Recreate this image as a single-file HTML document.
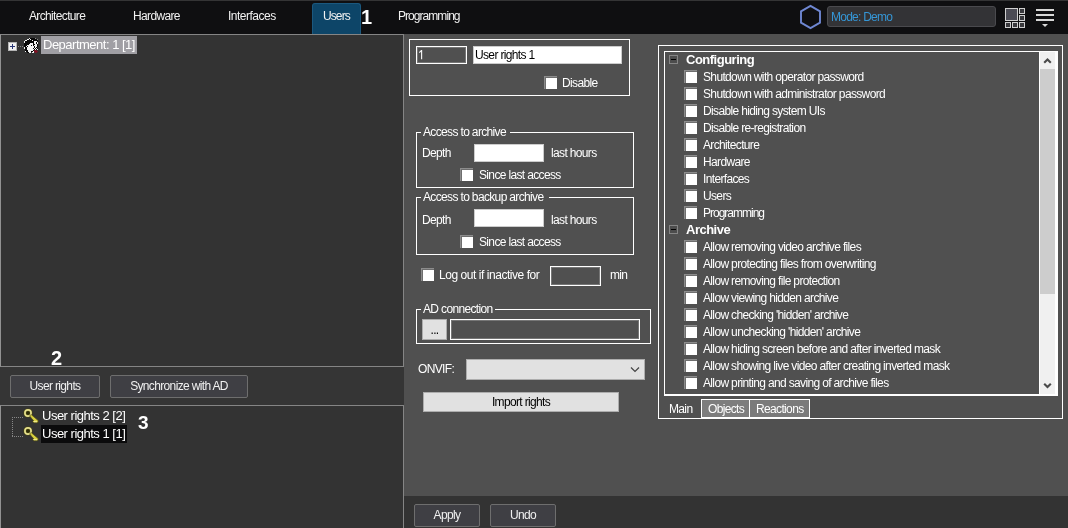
<!DOCTYPE html>
<html><head><meta charset="utf-8">
<style>
*{box-sizing:border-box;margin:0;padding:0}
html,body{width:1068px;height:528px;overflow:hidden;background:#505050;font-family:"Liberation Sans",sans-serif;font-size:12px;color:#fff}
.abs{position:absolute}
.t,.tab,.dbtn,.lbtn,.num{will-change:transform}
#top{left:0;top:0;width:1068px;height:34px;background:#0f0f11;border-top:1px solid #343435}
.tab{position:absolute;top:9px;font-size:12px;color:#f2f2f2;letter-spacing:-0.65px;white-space:nowrap}
#utab{left:312px;top:3px;width:49px;height:31px;background:#0d4568;border:1px solid #1b587e;border-bottom:none;border-radius:3px 3px 0 0}
.num{position:absolute;font-weight:bold;font-size:19px;color:#fff;line-height:19px}
#lp1{left:0;top:34px;width:404px;height:333px;background:#333;border:1px solid #858585;border-left:1px solid #929292}
#lpm{left:0;top:367px;width:404px;height:38px;background:#353535}
#lp2{left:0;top:405px;width:404px;height:123px;background:#333;border:1px solid #858585;border-left:1px solid #929292;border-bottom:none}
.dbtn span,.lbtn span{display:inline-block}
.dbtn{position:absolute;height:23px;background:#3f3f44;border:1px solid #6e6e6e;border-radius:2px;color:#f0f0f0;font-size:12px;letter-spacing:-0.65px;text-align:center;line-height:20px;white-space:nowrap}
.t{position:absolute;white-space:nowrap;font-size:12px;letter-spacing:-0.65px;color:#fff;line-height:14px}
#bot{left:404px;top:496px;width:664px;height:32px;background:#333}
.cb{position:absolute;width:13px;height:13px;background:#fff;box-shadow:inset 1px 1px 0 #8c8c8c, inset 2px 2px 0 #6e6e6e}
.box{position:absolute;border:1px solid #fff}
.di{box-shadow:inset 0 0 0 1px rgba(255,255,255,.22)}
.inp{position:absolute;background:#fff;border:1px solid #ccc}
.lbtn{position:absolute;background:#e1e1e1;border:1px solid #adadad;color:#000;font-size:12px;letter-spacing:-0.65px;text-align:center}
.mn{position:absolute;width:9px;height:9px;border:1px solid #858585;background:#4c4c4c}
.mn:after{content:"";position:absolute;left:1px;top:3px;width:5px;height:1px;background:#000}
</style></head><body>
<div id="top" class="abs"></div>
<div id="utab" class="abs"></div>
<div class="tab" style="left:29px">Architecture</div>
<div class="tab" style="left:133px">Hardware</div>
<div class="tab" style="left:227.5px;letter-spacing:-0.5px">Interfaces</div>
<div class="tab" style="left:323px;letter-spacing:-0.9px">Users</div>
<div class="tab" style="left:398px;letter-spacing:-0.95px">Programming</div>
<div class="num" style="left:361px;top:7px;font-size:20px;line-height:20px">1</div>

<div id="lp1" class="abs"></div>
<div id="lpm" class="abs"></div>
<div id="lp2" class="abs"></div>
<div id="bot" class="abs"></div>

<!-- left panel content -->
<div class="abs" style="left:8px;top:42px;width:9px;height:9px;background:#f2f2f2;border:1px solid #b5b5b5"></div>
<div class="abs" style="left:10px;top:46px;width:5px;height:1px;background:#2a3675"></div>
<div class="abs" style="left:12px;top:44px;width:1px;height:5px;background:#2a3675"></div>
<div class="abs" style="left:18px;top:46px;width:5px;height:1px;border-top:1px dotted #888"></div>
<svg class="abs" style="left:24px;top:38px" width="15" height="15" viewBox="0 0 15 15" shape-rendering="crispEdges"><rect x="5" y="0" width="1" height="1" fill="#f4f4f4"/><rect x="6" y="0" width="5" height="1" fill="#080808"/><rect x="11" y="0" width="1" height="1" fill="#8a8a8a"/><rect x="3" y="1" width="2" height="1" fill="#f4f4f4"/><rect x="5" y="1" width="1" height="1" fill="#080808"/><rect x="6" y="1" width="1" height="1" fill="#f4f4f4"/><rect x="7" y="1" width="6" height="1" fill="#080808"/><rect x="13" y="1" width="1" height="1" fill="#8a8a8a"/><rect x="1" y="2" width="2" height="1" fill="#f4f4f4"/><rect x="3" y="2" width="5" height="1" fill="#080808"/><rect x="8" y="2" width="1" height="1" fill="#f4f4f4"/><rect x="9" y="2" width="5" height="1" fill="#080808"/><rect x="0" y="3" width="1" height="1" fill="#f4f4f4"/><rect x="1" y="3" width="9" height="1" fill="#080808"/><rect x="10" y="3" width="3" height="1" fill="#f4f4f4"/><rect x="13" y="3" width="1" height="1" fill="#080808"/><rect x="0" y="4" width="1" height="1" fill="#f4f4f4"/><rect x="1" y="4" width="9" height="1" fill="#080808"/><rect x="10" y="4" width="2" height="1" fill="#f4f4f4"/><rect x="12" y="4" width="1" height="1" fill="#080808"/><rect x="13" y="4" width="1" height="1" fill="#f4f4f4"/><rect x="0" y="5" width="6" height="1" fill="#080808"/><rect x="6" y="5" width="3" height="1" fill="#f4f4f4"/><rect x="9" y="5" width="1" height="1" fill="#080808"/><rect x="10" y="5" width="2" height="1" fill="#f4f4f4"/><rect x="12" y="5" width="1" height="1" fill="#080808"/><rect x="13" y="5" width="1" height="1" fill="#f4f4f4"/><rect x="0" y="6" width="5" height="1" fill="#080808"/><rect x="5" y="6" width="4" height="1" fill="#f4f4f4"/><rect x="9" y="6" width="2" height="1" fill="#080808"/><rect x="11" y="6" width="2" height="1" fill="#f4f4f4"/><rect x="13" y="6" width="1" height="1" fill="#080808"/><rect x="0" y="7" width="3" height="1" fill="#080808"/><rect x="3" y="7" width="4" height="1" fill="#f4f4f4"/><rect x="7" y="7" width="1" height="1" fill="#080808"/><rect x="8" y="7" width="1" height="1" fill="#f4f4f4"/><rect x="9" y="7" width="1" height="1" fill="#080808"/><rect x="10" y="7" width="3" height="1" fill="#f4f4f4"/><rect x="13" y="7" width="1" height="1" fill="#080808"/><rect x="0" y="8" width="2" height="1" fill="#080808"/><rect x="2" y="8" width="1" height="1" fill="#f4f4f4"/><rect x="3" y="8" width="1" height="1" fill="#080808"/><rect x="4" y="8" width="6" height="1" fill="#f4f4f4"/><rect x="10" y="8" width="1" height="1" fill="#080808"/><rect x="11" y="8" width="2" height="1" fill="#f4f4f4"/><rect x="13" y="8" width="1" height="1" fill="#080808"/><rect x="0" y="9" width="1" height="1" fill="#f4f4f4"/><rect x="1" y="9" width="2" height="1" fill="#080808"/><rect x="3" y="9" width="7" height="1" fill="#f4f4f4"/><rect x="10" y="9" width="1" height="1" fill="#080808"/><rect x="11" y="9" width="1" height="1" fill="#f4f4f4"/><rect x="12" y="9" width="1" height="1" fill="#080808"/><rect x="0" y="10" width="1" height="1" fill="#f4f4f4"/><rect x="1" y="10" width="2" height="1" fill="#080808"/><rect x="3" y="10" width="6" height="1" fill="#f4f4f4"/><rect x="9" y="10" width="1" height="1" fill="#080808"/><rect x="10" y="10" width="1" height="1" fill="#f4f4f4"/><rect x="11" y="10" width="1" height="1" fill="#080808"/><rect x="12" y="10" width="1" height="1" fill="#f4f4f4"/><rect x="13" y="10" width="1" height="1" fill="#080808"/><rect x="1" y="11" width="2" height="1" fill="#080808"/><rect x="3" y="11" width="7" height="1" fill="#f4f4f4"/><rect x="10" y="11" width="1" height="1" fill="#080808"/><rect x="11" y="11" width="1" height="1" fill="#f4f4f4"/><rect x="12" y="11" width="1" height="1" fill="#080808"/><rect x="13" y="11" width="1" height="1" fill="#f4f4f4"/><rect x="1" y="12" width="3" height="1" fill="#080808"/><rect x="4" y="12" width="5" height="1" fill="#f4f4f4"/><rect x="9" y="12" width="1" height="1" fill="#080808"/><rect x="10" y="12" width="3" height="1" fill="#7a1424"/><rect x="1" y="13" width="1" height="1" fill="#f4f4f4"/><rect x="2" y="13" width="2" height="1" fill="#080808"/><rect x="4" y="13" width="3" height="1" fill="#f4f4f4"/><rect x="7" y="13" width="2" height="1" fill="#080808"/><rect x="9" y="13" width="1" height="1" fill="#f4f4f4"/><rect x="10" y="13" width="4" height="1" fill="#7a1424"/><rect x="3" y="14" width="2" height="1" fill="#080808"/><rect x="5" y="14" width="2" height="1" fill="#f4f4f4"/><rect x="8" y="14" width="2" height="1" fill="#f4f4f4"/><rect x="11" y="14" width="2" height="1" fill="#7a1424"/></svg>
<div class="abs" style="left:41px;top:36px;width:96px;height:18px;background:#a09fa4"></div>
<div class="t" style="left:43px;top:37px;font-size:13px;letter-spacing:-0.5px;line-height:15px;transform:none">Department: 1 [1]</div>
<div class="num" style="left:50.5px;top:349px;font-size:20px">2</div>
<div class="dbtn" style="left:10px;top:375px;width:90px"><span>User rights</span></div>
<div class="dbtn" style="left:110px;top:375px;width:138px"><span>Synchronize with AD</span></div>
<div class="abs" style="left:12px;top:417px;width:1px;height:19px;border-left:1px dotted #888"></div>
<div class="abs" style="left:12px;top:417px;width:11px;height:1px;border-top:1px dotted #888"></div>
<div class="abs" style="left:12px;top:436px;width:11px;height:1px;border-top:1px dotted #888"></div>
<svg class="abs key" style="left:23px;top:408px" width="17" height="17" viewBox="0 0 17 17"><g><circle cx="5" cy="5" r="3.1" fill="#2b2b0a" stroke="#4a4612" stroke-width="3"/><circle cx="5" cy="5" r="3.1" fill="none" stroke="#e6e08c" stroke-width="1.7"/><path d="M6.600 7.800 L8.200 6.600 L15.200 12.600 L15 14.600 L11.200 14.800 L9.600 13.600 L10.600 12.400 L9 11 Z" fill="#d8d040" stroke="#4a4612" stroke-width=".7"/><path d="M10.500 13.600 L14 13.800" stroke="#f2eea0" stroke-width="1"/></g></svg>
<svg class="abs key" style="left:23px;top:426px" width="17" height="17" viewBox="0 0 17 17"><g><circle cx="5" cy="5" r="3.1" fill="#2b2b0a" stroke="#4a4612" stroke-width="3"/><circle cx="5" cy="5" r="3.1" fill="none" stroke="#e6e08c" stroke-width="1.7"/><path d="M6.600 7.800 L8.200 6.600 L15.200 12.600 L15 14.600 L11.200 14.800 L9.600 13.600 L10.600 12.400 L9 11 Z" fill="#d8d040" stroke="#4a4612" stroke-width=".7"/><path d="M10.500 13.600 L14 13.800" stroke="#f2eea0" stroke-width="1"/></g></svg>
<div class="t" style="left:42px;top:408px;font-size:13px;letter-spacing:-0.5px;line-height:15px;transform:none">User rights 2 [2]</div>
<div class="abs" style="left:41px;top:425px;width:86px;height:18px;background:#0b0b0c"></div>
<div class="t" style="left:42px;top:426px;font-size:13px;letter-spacing:-0.5px;line-height:15px;transform:none">User rights 1 [1]</div>
<div class="num" style="left:138px;top:413px">3</div>

<!-- mode area -->
<svg class="abs" style="left:798px;top:3px" width="26" height="30" viewBox="0 0 26 30"><path d="M12.500 2.900 L22 8.400 L22 19.600 L12.500 25.100 L3 19.600 L3 8.400 Z" fill="none" stroke="#6f87d2" stroke-width="1.9"/></svg>
<div class="abs" style="left:827px;top:6px;width:169px;height:21px;background:#333336;border:1px solid #4a4a4e;border-radius:3px"></div>
<div class="t" style="left:831px;top:10px;color:#3596d6;font-size:12px;letter-spacing:-0.75px">Mode: Demo</div>
<svg class="abs" style="left:1004px;top:7px" width="22" height="22" viewBox="0 0 22 22"><g fill="#39393d" stroke="#cfcfcf" stroke-width="1"><rect x="1.5" y="1.5" width="12" height="12" fill="#4b4b54"/><rect x="15.500" y="1.500" width="5" height="5"/><rect x="15.500" y="8.500" width="5" height="5"/><rect x="1.500" y="15.500" width="5" height="5"/><rect x="8.500" y="15.500" width="5" height="5"/><rect x="15.500" y="15.500" width="5" height="5"/></g></svg>
<svg class="abs" style="left:1034px;top:7px" width="22" height="22" viewBox="0 0 22 22"><g fill="#d8d8d8"><rect x="2" y="2" width="18" height="2"/><rect x="2" y="7" width="18" height="2"/><rect x="2" y="12" width="18" height="2"/><path d="M8 17 L14 17 L11 20 Z"/></g></svg>

<!-- middle form -->
<div class="box" style="left:409px;top:39px;width:221px;height:57px"></div>
<div class="box di" style="left:416px;top:46px;width:51px;height:18px"></div>
<svg class="abs" style="left:418px;top:50px" width="6" height="10" viewBox="0 0 6 10"><path d="M3.600 0 V9.200 M3.600 0.300 L1.300 2.700" fill="none" stroke="#f4f4f4" stroke-width="1.15"/></svg>
<div class="inp" style="left:473px;top:46px;width:149px;height:18px"></div>
<div class="t" style="left:475px;top:48px;color:#000">User rights 1</div>
<div class="cb" style="left:544px;top:76px"></div>
<div class="t" style="left:562px;top:76px;">Disable</div>

<div class="box" style="left:416px;top:132px;width:218px;height:56px"></div>
<div class="abs" style="left:421px;top:129px;width:89px;height:6px;background:#505050"></div>
<div class="t" style="left:423px;top:125px;">Access to archive</div>
<div class="t" style="left:422px;top:146px;">Depth</div>
<div class="inp" style="left:474px;top:144px;width:70px;height:18px"></div>
<div class="t" style="left:551px;top:146px;">last hours</div>
<div class="cb" style="left:460px;top:168px"></div>
<div class="t" style="left:479px;top:168px;">Since last access</div>

<div class="box" style="left:416px;top:197px;width:218px;height:58px"></div>
<div class="abs" style="left:421px;top:194px;width:128px;height:6px;background:#505050"></div>
<div class="t" style="left:423px;top:190px;">Access to backup archive</div>
<div class="t" style="left:422px;top:213px;">Depth</div>
<div class="inp" style="left:474px;top:209px;width:70px;height:18px"></div>
<div class="t" style="left:551px;top:213px;">last hours</div>
<div class="cb" style="left:460px;top:235px"></div>
<div class="t" style="left:479px;top:235px;">Since last access</div>

<div class="cb" style="left:421px;top:268px"></div>
<div class="t" style="left:439px;top:268px;letter-spacing:-0.45px">Log out if inactive for</div>
<div class="box di" style="left:550px;top:266px;width:51px;height:20px"></div>
<div class="t" style="left:610px;top:268px;">min</div>

<div class="box" style="left:416px;top:309px;width:235px;height:35px"></div>
<div class="abs" style="left:421px;top:306px;width:74px;height:6px;background:#505050"></div>
<div class="t" style="left:423px;top:302px;">AD connection</div>
<div class="lbtn" style="left:422px;top:319px;width:25px;height:21px;line-height:20px"><span>...</span></div>
<div class="box di" style="left:450px;top:319px;width:190px;height:21px"></div>

<div class="t" style="left:418px;top:362px;">ONVIF:</div>
<div class="lbtn" style="left:466px;top:359px;width:179px;height:21px"></div>
<svg class="abs" style="left:630px;top:366px" width="10" height="8" viewBox="0 0 10 8"><path d="M1 1.500 L5 5.500 L9 1.500" fill="none" stroke="#444" stroke-width="1.2"/></svg>
<div class="lbtn" style="left:423px;top:392px;width:196px;height:20px;line-height:18px"><span>Import rights</span></div>

<div class="dbtn" style="left:414px;top:504px;width:66px"><span>Apply</span></div>
<div class="dbtn" style="left:490px;top:504px;width:66px"><span>Undo</span></div>

<!-- right panel -->
<div class="box" style="left:658px;top:45px;width:405px;height:374px"></div>
<div class="box" style="left:664px;top:51px;width:394px;height:345px;border-bottom-width:2px"></div>
<div class="abs" style="left:1039px;top:52px;width:18px;height:342px;background:#f0f0f0;border-left:1px solid #fff;border-right:2px solid #fff"></div>
<div class="abs" style="left:1040px;top:69px;width:15px;height:225px;background:#cdcdcd"></div>
<svg class="abs" style="left:1043px;top:57px" width="9" height="8" viewBox="0 0 9 8"><path d="M1.200 5.800 L4.500 2.500 L7.800 5.800" fill="none" stroke="#4a4a4a" stroke-width="2.1"/></svg>
<svg class="abs" style="left:1043px;top:382px" width="9" height="8" viewBox="0 0 9 8"><path d="M1.200 1.800 L4.500 5.100 L7.800 1.800" fill="none" stroke="#4a4a4a" stroke-width="2.1"/></svg>
<div class="mn" style="left:669px;top:55px"></div>
<div class="t" style="left:686px;top:53px;font-weight:bold;font-size:13px;letter-spacing:-0.5px">Configuring</div>
<div class="cb" style="left:684px;top:70px"></div>
<div class="t" style="left:703px;top:70px;">Shutdown with operator password</div>
<div class="cb" style="left:684px;top:87px"></div>
<div class="t" style="left:703px;top:87px;">Shutdown with administrator password</div>
<div class="cb" style="left:684px;top:104px"></div>
<div class="t" style="left:703px;top:104px;">Disable hiding system UIs</div>
<div class="cb" style="left:684px;top:121px"></div>
<div class="t" style="left:703px;top:121px;">Disable re-registration</div>
<div class="cb" style="left:684px;top:138px"></div>
<div class="t" style="left:703px;top:138px;">Architecture</div>
<div class="cb" style="left:684px;top:155px"></div>
<div class="t" style="left:703px;top:155px;">Hardware</div>
<div class="cb" style="left:684px;top:172px"></div>
<div class="t" style="left:703px;top:172px;">Interfaces</div>
<div class="cb" style="left:684px;top:189px"></div>
<div class="t" style="left:703px;top:189px;">Users</div>
<div class="cb" style="left:684px;top:206px"></div>
<div class="t" style="left:703px;top:206px;letter-spacing:-1px">Programming</div>
<div class="mn" style="left:669px;top:225px"></div>
<div class="t" style="left:686px;top:223px;font-weight:bold;font-size:13px;letter-spacing:-0.5px">Archive</div>
<div class="cb" style="left:684px;top:240px"></div>
<div class="t" style="left:703px;top:240px;">Allow removing video archive files</div>
<div class="cb" style="left:684px;top:257px"></div>
<div class="t" style="left:703px;top:257px;">Allow protecting files from overwriting</div>
<div class="cb" style="left:684px;top:274px"></div>
<div class="t" style="left:703px;top:274px;">Allow removing file protection</div>
<div class="cb" style="left:684px;top:291px"></div>
<div class="t" style="left:703px;top:291px;">Allow viewing hidden archive</div>
<div class="cb" style="left:684px;top:308px"></div>
<div class="t" style="left:703px;top:308px;">Allow checking &#39;hidden&#39; archive</div>
<div class="cb" style="left:684px;top:325px"></div>
<div class="t" style="left:703px;top:325px;">Allow unchecking &#39;hidden&#39; archive</div>
<div class="cb" style="left:684px;top:342px"></div>
<div class="t" style="left:703px;top:342px;">Allow hiding screen before and after inverted mask</div>
<div class="cb" style="left:684px;top:359px"></div>
<div class="t" style="left:703px;top:359px;">Allow showing live video after creating inverted mask</div>
<div class="cb" style="left:684px;top:376px"></div>
<div class="t" style="left:703px;top:376px;">Allow printing and saving of archive files</div>
<div class="t" style="left:669px;top:402px;">Main</div>
<div class="abs" style="left:701px;top:399px;width:49px;height:19px;background:#7d7d7d;border:1px solid #fff"></div>
<div class="abs" style="left:749px;top:399px;width:61px;height:19px;background:#7a7a7a;border:1px solid #fff"></div>
<div class="t" style="left:708px;top:402px;">Objects</div>
<div class="t" style="left:756px;top:402px;">Reactions</div>
</body></html>
